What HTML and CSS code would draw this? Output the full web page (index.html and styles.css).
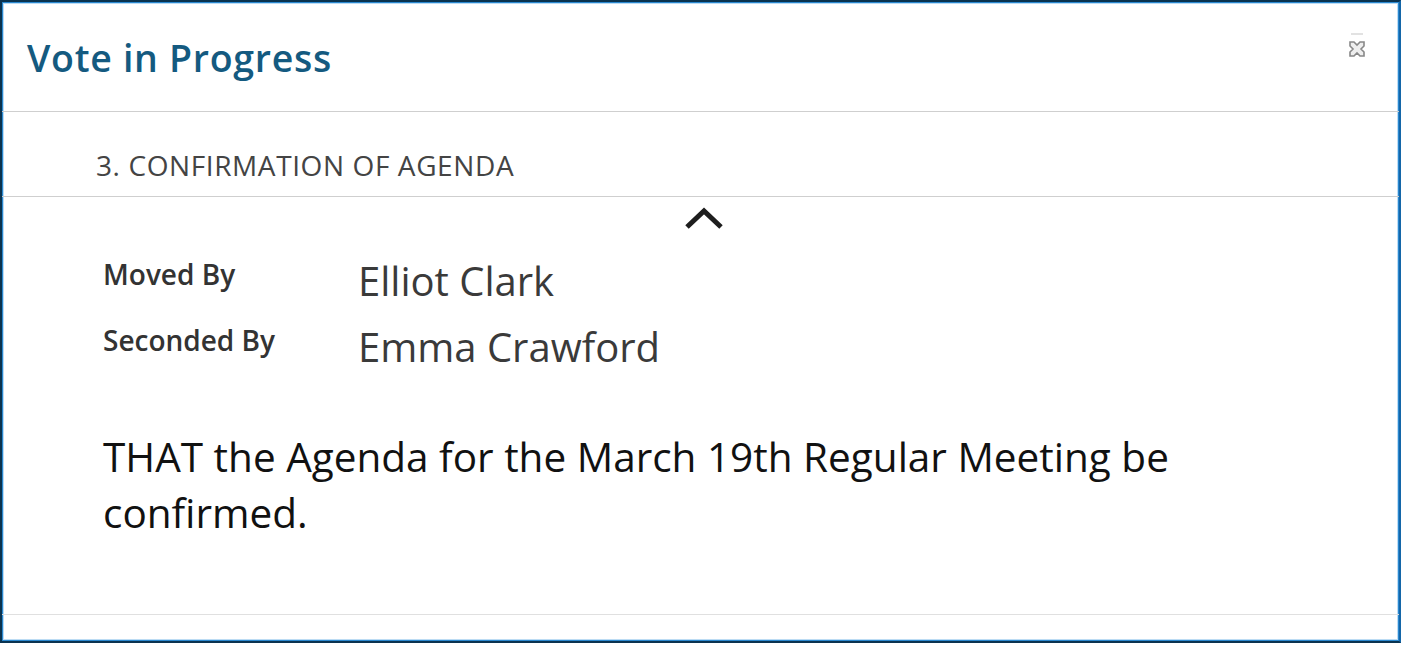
FILE: index.html
```html
<!DOCTYPE html>
<html lang="en">
<head>
    <meta charset="UTF-8">
    <title>Vote in Progress</title>
    <link rel="stylesheet" href="styles.css">
</head>
<body>
    <div class="dialog">
        <header class="dialog-header">
            <h1>Vote in Progress</h1>
            <button class="close" aria-label="Close">
                <svg width="20" height="28" viewBox="0 0 20 28">
                    <line x1="4" y1="2" x2="16" y2="2" stroke="#d8d8d8" stroke-width="1.5"/>
                    <path d="M3 10 L7 10 L10 13 L13 10 L17 10 L17 14 L14 17 L17 20 L17 24 L13 24 L10 21 L7 24 L3 24 L3 20 L6 17 L3 14 Z" fill="#eee" stroke="#888" stroke-width="1.6"/>
                </svg>
            </button>
        </header>

        <section class="item-title">3. CONFIRMATION OF AGENDA</section>

        <section class="item-body">
            <div class="toggle">
                <svg width="40" height="26" viewBox="0 0 40 26">
                    <polyline points="3,22 20,6 37,22" fill="none" stroke="#1e1e1e" stroke-width="5"/>
                </svg>
            </div>
            <div class="details">
                <div class="row">
                    <span class="label">Moved By</span>
                    <span class="value">Elliot Clark</span>
                </div>
                <div class="row">
                    <span class="label">Seconded By</span>
                    <span class="value">Emma Crawford</span>
                </div>
                <p class="motion">THAT the Agenda for the March 19th Regular Meeting be confirmed.</p>
            </div>
        </section>

        <footer class="dialog-footer"></footer>
    </div>
</body>
</html>
```

FILE: styles.css
```css
body {
    margin: 0;
    font-family: "Open Sans", Arial, sans-serif;
    background-color: #fff;
}

.dialog {
    width: 1401px;
    height: 643px;
    box-sizing: border-box;
    border: 2px solid #0a3350;
    border-right-color: #1466a8;
    box-shadow: inset 0 0 0 1px #2a88d0, inset 0 0 0 2px #bcdcf4;
    display: flex;
    flex-direction: column;
}

.dialog-header {
    display: flex;
    justify-content: space-between;
    align-items: flex-start;
    height: 109px;
    border-bottom: 1px solid #cfcfcf;
    padding: 0 32px 0 25px;
}

.dialog-header h1 {
    margin: 30px 0 0;
    font-size: 37.5px;
    font-weight: 600;
    letter-spacing: 0.7px;
    color: #145a80;
}

.close {
    background: none;
    border: none;
    padding: 0;
    margin-top: 30px;
    cursor: pointer;
}

.item-title {
    height: 85px;
    box-sizing: border-box;
    padding: 34px 0 0 94px;
    font-size: 28px;
    letter-spacing: 0.6px;
    color: #444;
    border-bottom: 1px solid #cfcfcf;
}

.item-body {
    flex: 1;
    border-bottom: 1px solid #e0e0e0;
}

.toggle {
    display: flex;
    justify-content: center;
    padding: 8px 0 0 7px;
}

.details {
    padding: 17px 200px 0 101px;
}

.row {
    display: flex;
    align-items: flex-start;
    height: 66px;
}

.label {
    width: 255px;
    font-size: 28px;
    line-height: 52px;
    font-weight: 600;
    color: #333;
}

.value {
    font-size: 40px;
    line-height: 66px;
    color: #3a3a3a;
}

.motion {
    margin: 49px 0 0;
    font-size: 40.5px;
    line-height: 56px;
    color: #111;
}

.dialog-footer {
    height: 26px;
}
```
